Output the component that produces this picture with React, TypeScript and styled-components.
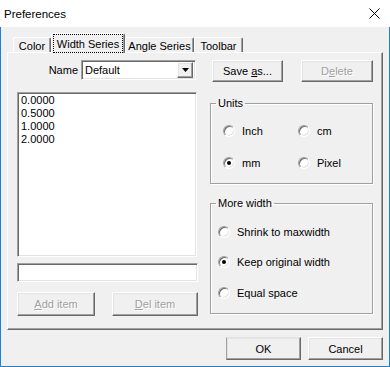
import React from 'react';
import styled, { createGlobalStyle, css } from 'styled-components';

const GlobalStyle = createGlobalStyle`
  html, body {
    margin: 0;
    padding: 0;
    background: #f0f0f0;
  }
  * {
    box-sizing: border-box;
  }
`;

const raised = css`
  border: 1px solid;
  border-color: #ffffff #696969 #696969 #ffffff;
  box-shadow: inset -1px -1px 0 #a0a0a0, inset 1px 1px 0 #e3e3e3;
`;

const sunken = css`
  border: 1px solid;
  border-color: #a0a0a0 #ffffff #ffffff #a0a0a0;
  box-shadow: inset 1px 1px 0 #696969, inset -1px -1px 0 #e3e3e3;
`;

const Window = styled.div`
  width: 390px;
  height: 367px;
  display: flex;
  flex-direction: column;
  background: #f0f0f0;
  border: 1px solid #1883d7;
  border-top: none;
  font-family: "Liberation Sans", Arial, sans-serif;
  font-size: 11px;
  color: #000;
`;

const TitleBar = styled.div`
  height: 27px;
  flex: none;
  display: flex;
  align-items: center;
  justify-content: space-between;
  background: #ffffff;
  padding: 0 10px 0 4px;
  margin: 0 -1px;
  font-size: 11.5px;
`;

const Client = styled.div`
  flex: 1;
  display: flex;
  flex-direction: column;
  padding: 6px 6px 0 6px;
`;

const TabStrip = styled.div`
  height: 19px;
  display: flex;
  align-items: flex-end;
  padding-left: 6px;
  position: relative;
  z-index: 1;
`;

const Tab = styled.div<{ $w: number; $active?: boolean }>`
  width: ${p => p.$w}px;
  height: ${p => (p.$active ? 20 : 15)}px;
  margin-bottom: ${p => (p.$active ? -1 : 0)}px;
  background: #f0f0f0;
  border: 1px solid;
  border-bottom: none;
  border-color: #ffffff #696969 transparent #ffffff;
  box-shadow: inset -1px 0 0 #a0a0a0;
  border-radius: 2px 2px 0 0;
  display: flex;
  align-items: ${p => (p.$active ? 'flex-start' : 'center')};
  justify-content: center;
  padding: ${p => (p.$active ? '1px 2px 0' : '1px 0 0')};
`;

const FocusText = styled.span`
  flex: 1;
  height: 17px;
  display: flex;
  align-items: center;
  justify-content: center;
  outline: 1px dotted #000;
`;

const Panel = styled.div`
  width: 376px;
  height: 278px;
  ${raised};
  box-shadow: inset -1px -1px 0 #a0a0a0;
  display: flex;
  align-items: flex-start;
  padding: 7px 0 0 9px;
`;

const LeftCol = styled.div`
  width: 181px;
  display: flex;
  flex-direction: column;
`;

const RightCol = styled.div`
  width: 163px;
  margin-left: 12px;
  display: flex;
  flex-direction: column;
`;

const NameRow = styled.div`
  height: 20px;
  display: flex;
  align-items: center;
  justify-content: flex-end;
  gap: 3px;
  padding-right: 2px;
`;

const Select = styled.div`
  width: 115px;
  height: 20px;
  ${sunken};
  background: #ffffff;
  display: flex;
  align-items: center;
  padding: 0 2px 0 3px;
`;

const SelectValue = styled.span`
  flex: 1;
`;

const ArrowButton = styled.div`
  width: 16px;
  height: 16px;
  ${raised};
  background: #f0f0f0;
  display: flex;
  align-items: center;
  justify-content: center;
`;

const ListBox = styled.div`
  margin-top: 12px;
  width: 180px;
  height: 165px;
  ${sunken};
  background: #ffffff;
  padding: 1px 3px;
  line-height: 13px;
`;

const TextInput = styled.div`
  margin-top: 6px;
  width: 181px;
  height: 19px;
  ${sunken};
  background: #ffffff;
`;

const ButtonRow = styled.div`
  margin-top: 10px;
  display: flex;
  justify-content: space-between;
`;

const Button = styled.div<{ $w: number; $h?: number; $disabled?: boolean; $default?: boolean }>`
  width: ${p => p.$w}px;
  height: ${p => p.$h ?? 24}px;
  ${raised};
  ${p => p.$default && css`border-left-color: #a0a0a0; border-top-color: #e3e3e3;`}
  background: #f0f0f0;
  display: flex;
  align-items: center;
  justify-content: center;
  color: ${p => (p.$disabled ? '#a0a0a0' : '#000')};
  text-shadow: ${p => (p.$disabled ? '1px 1px 0 #ffffff' : 'none')};
`;

const Key = styled.span`
  text-decoration: underline;
`;

const SaveRow = styled.div`
  display: flex;
  gap: 18px;
  padding-left: 2px;
`;

const Group = styled.fieldset<{ $h: number; $mt: number }>`
  margin: ${p => p.$mt}px 0 0 0;
  height: ${p => p.$h}px;
  width: 163px;
  padding: 0;
  border: 1px solid #a0a0a0;
  box-shadow: inset 1px 1px 0 #ffffff, 1px 1px 0 #ffffff;
  min-inline-size: 0;
`;

const Legend = styled.legend`
  margin-left: 5px;
  padding: 0 2px;
  line-height: 13px;
`;

const UnitsGrid = styled.div`
  display: grid;
  grid-template-columns: 75px 1fr;
  row-gap: 19px;
  padding: 14px 0 0 12px;
`;

const WidthList = styled.div`
  display: flex;
  flex-direction: column;
  gap: 17.5px;
  padding: 15px 0 0 7px;
`;

const RadioRow = styled.div`
  display: flex;
  align-items: center;
  gap: 7px;
  height: 13px;
`;

const RadioCircle = styled.span<{ $checked?: boolean }>`
  width: 12px;
  height: 12px;
  border-radius: 50%;
  border: 1px solid;
  border-color: #a0a0a0 #ffffff #ffffff #a0a0a0;
  box-shadow: inset 1px 1px 0 #696969, inset -1px -1px 0 #e3e3e3;
  background: #ffffff;
  display: flex;
  align-items: center;
  justify-content: center;
  flex: none;

  &::after {
    content: '';
    width: 4px;
    height: 4px;
    border-radius: 50%;
    background: ${p => (p.$checked ? '#000' : 'transparent')};
  }
`;

const Footer = styled.div`
  display: flex;
  justify-content: flex-end;
  gap: 7px;
  margin-top: 7px;
  padding-right: 0;
`;

const Radio: React.FC<{ label: string; checked?: boolean }> = ({ label, checked }) => (
  <RadioRow>
    <RadioCircle $checked={checked} />
    <span>{label}</span>
  </RadioRow>
);

const App: React.FC = () => {
  const values = ['0.0000', '0.5000', '1.0000', '2.0000'];

  return (
    <>
      <GlobalStyle />
      <Window>
        <TitleBar>
          <span>Preferences</span>
          <svg width="11" height="11" viewBox="0 0 11 11">
            <path d="M0.5 0.5 L10.5 10.5 M10.5 0.5 L0.5 10.5" stroke="#000" strokeWidth="1" />
          </svg>
        </TitleBar>
        <Client>
          <TabStrip>
            <Tab $w={38}>Color</Tab>
            <Tab $w={74} $active>
              <FocusText>Width Series</FocusText>
            </Tab>
            <Tab $w={69}>Angle Series</Tab>
            <Tab $w={49}>Toolbar</Tab>
          </TabStrip>
          <Panel>
            <LeftCol>
              <NameRow>
                <span>Name</span>
                <Select>
                  <SelectValue>Default</SelectValue>
                  <ArrowButton>
                    <svg width="7" height="4" viewBox="0 0 7 4">
                      <path d="M0 0 H7 L3.5 4 Z" fill="#000" />
                    </svg>
                  </ArrowButton>
                </Select>
              </NameRow>
              <ListBox>
                {values.map(v => (
                  <div key={v}>{v}</div>
                ))}
              </ListBox>
              <TextInput />
              <ButtonRow>
                <Button $w={78} $disabled>
                  <span><Key>A</Key>dd item</span>
                </Button>
                <Button $w={86} $disabled>
                  <span><Key>D</Key>el item</span>
                </Button>
              </ButtonRow>
            </LeftCol>
            <RightCol>
              <SaveRow>
                <Button $w={71} $h={22}>
                  <span>Save <Key>a</Key>s...</span>
                </Button>
                <Button $w={72} $h={22} $disabled>
                  <span>D<Key>e</Key>lete</span>
                </Button>
              </SaveRow>
              <Group $h={87} $mt={15}>
                <Legend>Units</Legend>
                <UnitsGrid>
                  <Radio label="Inch" />
                  <Radio label="cm" />
                  <Radio label="mm" checked />
                  <Radio label="Pixel" />
                </UnitsGrid>
              </Group>
              <Group $h={117} $mt={13}>
                <Legend>More width</Legend>
                <WidthList>
                  <Radio label="Shrink to maxwidth" />
                  <Radio label="Keep original width" checked />
                  <Radio label="Equal space" />
                </WidthList>
              </Group>
            </RightCol>
          </Panel>
          <Footer>
            <Button $w={75} $h={23} $default>OK</Button>
            <Button $w={75} $h={23}>Cancel</Button>
          </Footer>
        </Client>
      </Window>
    </>
  );
};

export default App;
